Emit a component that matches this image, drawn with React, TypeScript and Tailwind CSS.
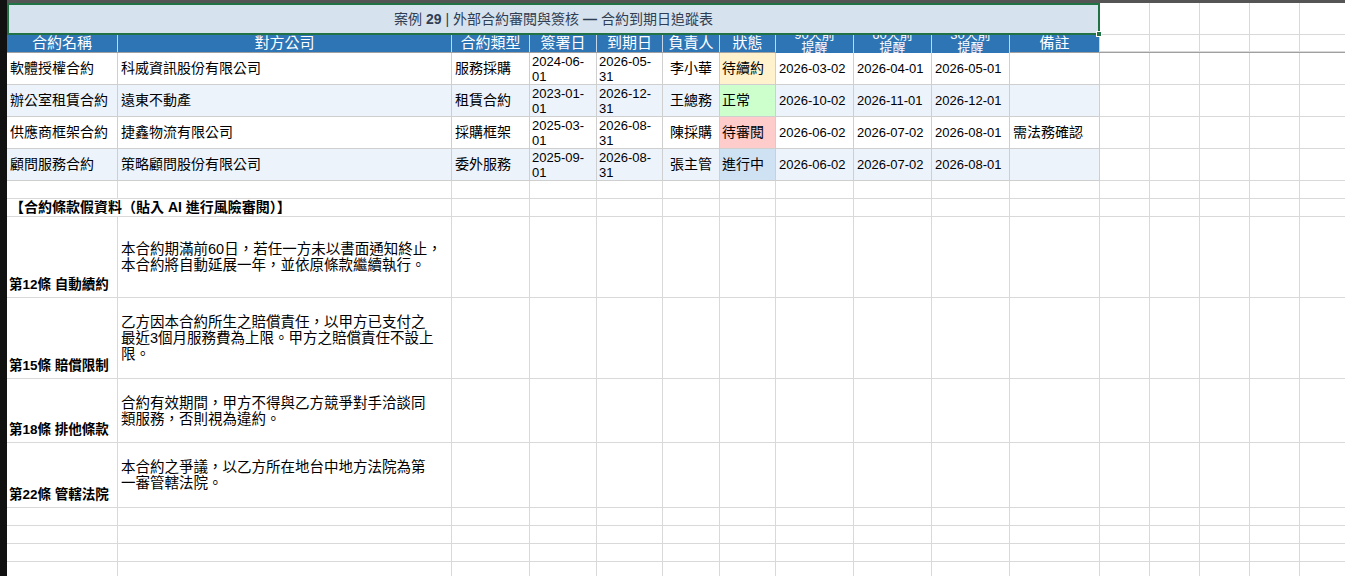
const font = { fontFamily: '"Liberation Sans", "Noto Sans CJK TC", sans-serif' };

const headers = ["合約名稱", "對方公司", "合約類型", "簽署日", "到期日", "負責人", "狀態", "90天前提醒", "60天前提醒", "30天前提醒", "備註"];

const rows = [
  { name: "軟體授權合約", co: "科威資訊股份有限公司", type: "服務採購", sign: ["2024-06-", "01"], due: ["2026-05-", "31"], owner: "李小華", status: "待續約", sc: "bg-[#fff2cc]", r: ["2026-03-02", "2026-04-01", "2026-05-01"], note: "" },
  { name: "辦公室租賃合約", co: "遠東不動產", type: "租賃合約", sign: ["2023-01-", "01"], due: ["2026-12-", "31"], owner: "王總務", status: "正常", sc: "bg-[#ccffcc]", r: ["2026-10-02", "2026-11-01", "2026-12-01"], note: "" },
  { name: "供應商框架合約", co: "捷鑫物流有限公司", type: "採購框架", sign: ["2025-03-", "01"], due: ["2026-08-", "31"], owner: "陳採購", status: "待審閱", sc: "bg-[#ffcccc]", r: ["2026-06-02", "2026-07-02", "2026-08-01"], note: "需法務確認" },
  { name: "顧問服務合約", co: "策略顧問股份有限公司", type: "委外服務", sign: ["2025-09-", "01"], due: ["2026-08-", "31"], owner: "張主管", status: "進行中", sc: "bg-[#cfe2f3]", r: ["2026-06-02", "2026-07-02", "2026-08-01"], note: "" },
];

const clauses = [
  { t: "第12條 自動續約", lines: ["本合約期滿前60日，若任一方未以書面通知終止，", "本合約將自動延展一年，並依原條款繼續執行。"], h: "h-[81px]" },
  { t: "第15條 賠償限制", lines: ["乙方因本合約所生之賠償責任，以甲方已支付之", "最近3個月服務費為上限。甲方之賠償責任不設上", "限。"], h: "h-[81px]" },
  { t: "第18條 排他條款", lines: ["合約有效期間，甲方不得與乙方競爭對手洽談同", "類服務，否則視為違約。"], h: "h-[64px]" },
  { t: "第22條 管轄法院", lines: ["本合約之爭議，以乙方所在地台中地方法院為第", "一審管轄法院。"], h: "h-[65px]" },
];

const widths = ["w-[111px]", "w-[334px]", "w-[78px]", "w-[67px]", "w-[66px]", "w-[57px]", "w-[56px]", "w-[78px]", "w-[78px]", "w-[78px]", "w-[90px]"];
const extra = ["w-[50px]", "w-[50px]", "w-[50px]", "w-[50px]", "w-[50px]"];

const Blank = ({ h }: { h: string }) => (
  <div className={`flex ${h}`}>
    {widths.map((w, i) => (
      <div key={i} className={`${w} shrink-0 border-r border-b border-[#d9d9d9]`} />
    ))}
    {extra.map((w, i) => (
      <div key={i} className={`${w} shrink-0 border-r border-b border-[#d9d9d9]`} />
    ))}
  </div>
);

const Extra = () => (
  <>
    {extra.map((w, i) => (
      <div key={i} className={`${w} shrink-0 border-r border-b border-[#d9d9d9]`} />
    ))}
  </>
);

export default function App() {
  return (
    <div className="w-[1345px] h-[576px] overflow-hidden bg-white flex text-[14px] text-black" style={font}>
      <div className="w-[7px] shrink-0 bg-[#111]" />
      <div className="flex-1 flex flex-col overflow-hidden">
        <div className="h-[3px] shrink-0 bg-[#555]" />
        {/* title */}
        <div className="flex h-[32px] shrink-0">
          <div className="w-[1093px] shrink-0 bg-[#d6e3ee] border-2 border-[#217346] flex items-center justify-center text-[14px] text-[#2f3e55] relative">
            案例 <b className="mx-1">29</b> | 外部合約審閱與簽核 <b className="mx-1">—</b> 合約到期日追蹤表
            <div className="absolute -right-[4px] -bottom-[4px] w-[6px] h-[6px] bg-[#217346] border border-white" />
          </div>
          <Extra />
        </div>
        {/* header */}
        <div className="flex h-[18px] shrink-0 border-b border-[#a0a0a0]">
          {headers.map((h, i) => (
            <div key={i} className={`${widths[i]} shrink-0 bg-[#2e75b6] text-white border-r border-[#c8d6e5] overflow-hidden flex justify-center ${i >= 7 && i <= 9 ? "items-start text-[13px] leading-[13px] -mt-[7px] h-[25px] px-3 text-center" : "items-center text-[15px]"}`}>
              {h}
            </div>
          ))}
          <Extra />
        </div>
        {rows.map((r, ri) => {
          const bg = ri % 2 === 1 ? "bg-[#edf3fb]" : "bg-white";
          const c = `shrink-0 border-r border-b border-[#cfcfcf] flex items-center px-[3px] whitespace-nowrap overflow-hidden ${bg}`;
          const two = `shrink-0 border-r border-b border-[#cfcfcf] flex flex-col justify-center px-[2px] leading-[15px] text-[13px] ${bg}`;
          return (
            <div key={ri} className="flex h-[32px] shrink-0">
              <div className={`${widths[0]} ${c}`}>{r.name}</div>
              <div className={`${widths[1]} ${c}`}>{r.co}</div>
              <div className={`${widths[2]} ${c}`}>{r.type}</div>
              <div className={`${widths[3]} ${two}`}><span>{r.sign[0]}</span><span>{r.sign[1]}</span></div>
              <div className={`${widths[4]} ${two}`}><span>{r.due[0]}</span><span>{r.due[1]}</span></div>
              <div className={`${widths[5]} ${c} justify-center`}>{r.owner}</div>
              <div className={`${widths[6]} shrink-0 border-r border-b border-[#cfcfcf] flex items-center px-[2px] whitespace-nowrap ${r.sc}`}>{r.status}</div>
              {r.r.map((d, di) => (
                <div key={di} className={`${widths[7 + di]} ${c} text-[13px]`}>{d}</div>
              ))}
              <div className={`${widths[10]} ${c}`}>{r.note}</div>
              <Extra />
            </div>
          );
        })}
        <Blank h="h-[18px] shrink-0" />
        <div className="flex h-[18px] shrink-0">
          <div className="w-[445px] shrink-0 border-r border-b border-[#d9d9d9] flex items-center px-[3px] font-bold whitespace-nowrap">【合約條款假資料（貼入 AI 進行風險審閱）】</div>
          {widths.slice(2).map((w, i) => (
            <div key={i} className={`${w} shrink-0 border-r border-b border-[#d9d9d9]`} />
          ))}
          <Extra />
        </div>
        {clauses.map((cl, ci) => (
          <div key={ci} className={`flex ${cl.h} shrink-0`}>
            <div className={`${widths[0]} shrink-0 border-r border-b border-[#d9d9d9] flex items-end pb-[2px] pl-[2px] font-bold whitespace-nowrap text-[13.5px]`}>{cl.t}</div>
            <div className={`${widths[1]} shrink-0 border-r border-b border-[#d9d9d9] flex flex-col justify-center px-[3px] leading-[16px] whitespace-nowrap text-[14.5px]`}>
              {cl.lines.map((l, li) => (
                <span key={li}>{l}</span>
              ))}
            </div>
            {widths.slice(2).map((w, i) => (
              <div key={i} className={`${w} shrink-0 border-r border-b border-[#d9d9d9]`} />
            ))}
            <Extra />
          </div>
        ))}
        <Blank h="h-[18px] shrink-0" />
        <Blank h="h-[18px] shrink-0" />
        <Blank h="h-[18px] shrink-0" />
        <Blank h="h-[18px] shrink-0" />
      </div>
    </div>
  );
}
